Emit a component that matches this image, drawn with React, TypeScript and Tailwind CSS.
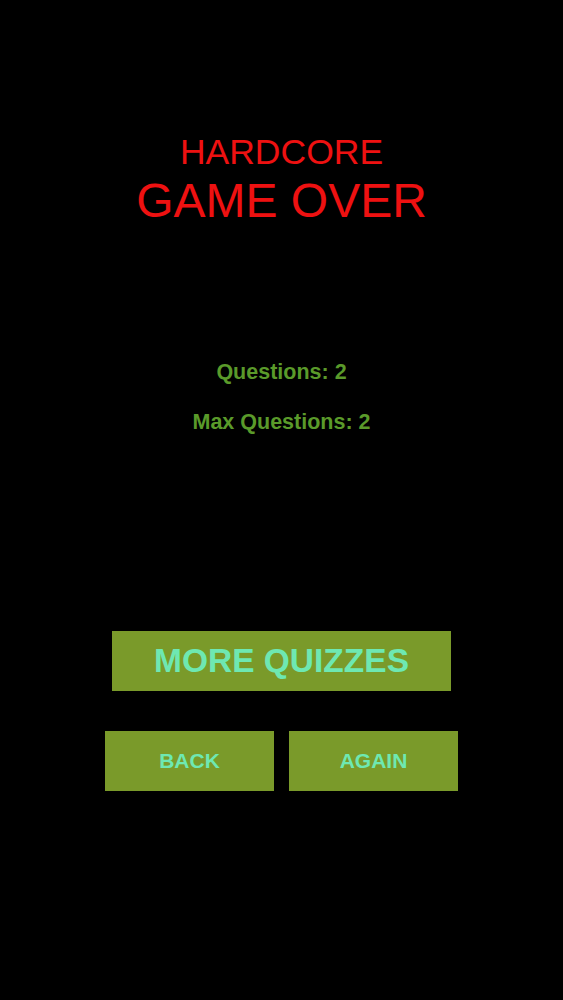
import React from 'react';

const FONT = { fontFamily: '"Liberation Sans", Arial, sans-serif' };

export default function App() {
  return (
    <div className="min-h-[1000px] w-full bg-black flex flex-col items-center" style={FONT}>
      {/* Title */}
      <div className="pt-[135px] flex flex-col items-center text-[#ee1111]">
        <h2 className="text-[35.5px] leading-none">HARDCORE</h2>
        <h1 className="mt-[6px] text-[48px] leading-none">GAME OVER</h1>
      </div>

      {/* Stats */}
      <div className="mt-[137px] flex flex-col items-center gap-[29px] text-[#5a9a2a] font-bold text-[21.5px] leading-none">
        <p>Questions: 2</p>
        <p>Max Questions: 2</p>
      </div>

      {/* Buttons */}
      <div className="mt-[197px] flex flex-col items-center gap-[40px]">
        <button className="w-[339px] h-[60px] bg-[#7a9a2a] text-[#6ee8b2] font-bold text-[33.5px] leading-none">
          MORE QUIZZES
        </button>
        <div className="flex gap-[15px]">
          <button className="w-[169px] h-[60px] bg-[#7a9a2a] text-[#6ee8b2] font-bold text-[21px] leading-none">
            BACK
          </button>
          <button className="w-[169px] h-[60px] bg-[#7a9a2a] text-[#6ee8b2] font-bold text-[21px] leading-none">
            AGAIN
          </button>
        </div>
      </div>
    </div>
  );
}
